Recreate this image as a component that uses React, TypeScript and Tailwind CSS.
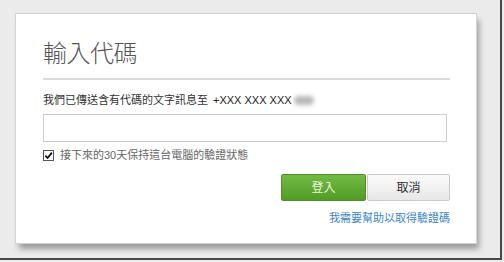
export default function App() {
  const cjk = { fontFamily: '"Liberation Sans", "Noto Sans CJK TC", sans-serif' };

  return (
    <div className="w-[504px] h-[262px] bg-[#ebebeb] overflow-hidden" style={cjk}>
      <div className="w-[502px] h-[260px] border-r-2 border-b-2 border-[#474747] pt-[13px] pl-[15px]">
        {/* Dialog */}
        <div className="w-[462px] h-[231px] bg-white border border-[#d2d2d2] shadow-[3px_6px_6px_-1px_rgba(0,0,0,0.35)] pt-[25px] pl-[27px] pr-[26px]">
          <h1 className="text-[24px] leading-[30px] text-[#555] font-light tracking-[-0.5px]">輸入代碼</h1>
          <div className="mt-[9px] h-[2px] bg-[#dcdcdc]" />

          <p className="mt-[13px] text-[11px] leading-[14px] text-[#333] flex items-center">
            <span>我們已傳送含有代碼的文字訊息至</span>
            <span className="ml-[5px] text-[#222]">+XXX XXX XXX</span>
            <span className="ml-[2px] w-[20px] h-[9px] rounded-full bg-[#b8b8b8] blur-[2px]" />
          </p>

          <input
            type="text"
            className="mt-[7px] block w-[404px] h-[28px] border border-[#cfcfcf] bg-white outline-none"
          />

          <label className="mt-[6px] flex items-center text-[11px] leading-[14px] text-[#666]">
            <span className="w-[11px] h-[11px] border border-[#555] bg-white flex items-center justify-center">
              <svg width="9" height="9" viewBox="0 0 9 9">
                <path d="M1.2 4.6 L3.6 7 L7.9 1.6" fill="none" stroke="#111" strokeWidth="1.8" />
              </svg>
            </span>
            <span className="ml-[6px]">接下來的30天保持這台電腦的驗證狀態</span>
          </label>

          <div className="mt-[12px] flex justify-end">
            <button className="w-[85px] h-[27px] rounded-[2px] border border-[#4e8f27] bg-gradient-to-b from-[#72ba42] to-[#519c27] text-[12px] text-[#eaf6df]">
              登入
            </button>
            <button className="ml-[1px] w-[83px] h-[27px] rounded-[2px] border border-[#c9c9c9] bg-gradient-to-b from-[#fbfbfb] to-[#e7e7e7] text-[12px] text-[#333]">
              取消
            </button>
          </div>

          <div className="mt-[10px] flex justify-end">
            <a className="text-[11px] leading-[14px] text-[#3a86c4]">我需要幫助以取得驗證碼</a>
          </div>
        </div>
      </div>
    </div>
  );
}
